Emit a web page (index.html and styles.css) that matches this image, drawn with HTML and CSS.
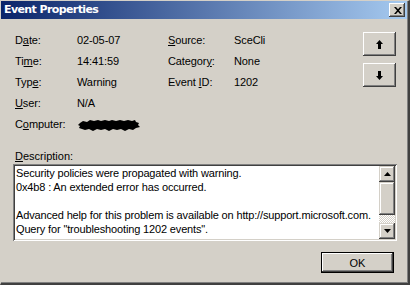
FILE: index.html
```html
<!DOCTYPE html>
<html>
<head>
<meta charset="utf-8">
<link rel="stylesheet" href="styles.css">
</head>
<body>
<div class="window">
  <div class="titlebar">
    <span class="title">Event Properties</span>
    <span class="close">
      <svg width="8" height="7" viewBox="0 0 8 7"><path d="M0 0h2l2 2.3L6 0h2L5 3.5 8 7H6L4 4.7 2 7H0l3-3.5z" fill="#000"/></svg>
    </span>
  </div>
  <div class="content">
    <div class="top">
      <div class="fields">
        <span>D<u>a</u>te:</span><span>02-05-07</span><span><u>S</u>ource:</span><span>SceCli</span>
        <span>Ti<u>m</u>e:</span><span>14:41:59</span><span>Categor<u>y</u>:</span><span>None</span>
        <span>Typ<u>e</u>:</span><span>Warning</span><span>Event <u>I</u>D:</span><span>1202</span>
        <span><u>U</u>ser:</span><span>N/A</span><span></span><span></span>
        <span>C<u>o</u>mputer:</span><span class="blot"><svg width="62" height="11" viewBox="0 0 62 11"><path d="M2 3 L5 1 L9 2 L12 0 L16 1 L20 0 L23 1 L27 0 L31 1 L34 0 L38 1 L42 0 L46 1 L50 0 L54 1 L57 0 L58 2 L61 3 L60 5 L62 7 L58 8 L55 10 L51 9 L47 11 L43 9 L39 10 L35 9 L31 11 L27 9 L23 10 L19 9 L15 11 L11 9 L7 10 L4 9 L1 8 L2 6 L0 5 Z" fill="#000"/></svg></span><span></span><span></span>
      </div>
      <div class="navs">
        <button class="btn nav"><svg width="7" height="9" viewBox="0 0 7 9"><path d="M3.5 0L7 4H5v5H2V4H0z" fill="#000"/></svg></button>
        <button class="btn nav"><svg width="7" height="9" viewBox="0 0 7 9"><path d="M3.5 9L7 5H5V0H2v5H0z" fill="#000"/></svg></button>
      </div>
    </div>
    <div class="desc-label"><u>D</u>escription:</div>
    <div class="textbox">
      <div class="text">
        <div>Security policies were propagated with warning.</div>
        <div>0x4b8 : An extended error has occurred.</div>
        <div>&nbsp;</div>
        <div>Advanced help for this problem is available on http://support.microsoft.com.</div>
        <div>Query for "troubleshooting 1202 events".</div>
      </div>
      <div class="scrollbar">
        <div class="sb-btn"><svg width="7" height="4" viewBox="0 0 7 4"><path d="M3.5 0L7 4H0z" fill="#000"/></svg></div>
        <div class="sb-thumb"></div>
        <div class="sb-track"></div>
        <div class="sb-btn"><svg width="7" height="4" viewBox="0 0 7 4"><path d="M0 0h7L3.5 4z" fill="#000"/></svg></div>
      </div>
    </div>
    <div class="footer">
      <button class="btn ok">OK</button>
    </div>
  </div>
</div>
</body>
</html>
```

FILE: styles.css
```css
* { box-sizing: border-box; }
html, body { margin: 0; padding: 0; }
body {
  width: 410px;
  height: 285px;
  background: #d4d0c8;
  font-family: "Liberation Sans", Arial, sans-serif;
  font-size: 11px;
  color: #000;
  overflow: hidden;
}
u { text-decoration: underline; text-underline-offset: 1px; }
.window {
  width: 410px;
  height: 285px;
  background: #d4d0c8;
  border-top: 1px solid #d4d0c8;
  border-left: 1px solid #d4d0c8;
  border-right: 2px solid #404040;
  border-bottom: 2px solid #404040;
  box-shadow: inset -1px -1px 0 #808080;
  padding: 0 1px 1px 0;
  display: flex;
  flex-direction: column;
}
.titlebar {
  height: 18px;
  flex: none;
  background: linear-gradient(to right, #0a246a, #a6caf0);
  display: flex;
  align-items: flex-start;
  justify-content: space-between;
  padding: 0 2px 0 3px;
}
.title {
  color: #fff;
  font-family: "DejaVu Sans", sans-serif;
  font-weight: bold;
  font-size: 11px;
  line-height: 18px;
  letter-spacing: -0.6px;
}
.close {
  margin-top: 2px;
  width: 16px;
  height: 14px;
  background: #d4d0c8;
  box-shadow: inset -1px -1px 0 #404040, inset 1px 1px 0 #fff, inset -2px -2px 0 #808080;
  display: flex;
  align-items: center;
  justify-content: center;
  padding-left: 1px;
}
.close svg { display: block; }
.content {
  flex: 1;
  padding: 11px 10px 0 12px;
  display: flex;
  flex-direction: column;
}
.top {
  display: grid;
  grid-template-columns: 1fr 33px;
  column-gap: 0;
  margin-right: 1px;
}
.fields {
  display: grid;
  grid-template-columns: 62px 91px 66px 1fr;
  grid-auto-rows: 21px;
  line-height: 21px;
  padding-left: 2px;
  white-space: nowrap;
  letter-spacing: -0.1px;
}
.blot { display: flex; align-items: center; padding-left: 1px; }
.blot svg { display: block; margin-top: 1px; }
.navs {
  display: flex;
  flex-direction: column;
  gap: 7px;
  padding-top: 2px;
}
.btn {
  margin: 0;
  padding: 0;
  border: none;
  background: #d4d0c8;
  font-family: "Liberation Sans", Arial, sans-serif;
  font-size: 11px;
  color: #000;
  box-shadow: inset -1px -1px 0 #404040, inset 1px 1px 0 #fff, inset -2px -2px 0 #808080;
  display: flex;
  align-items: center;
  justify-content: center;
}
.nav { width: 33px; height: 24px; }
.nav svg { display: block; }
.desc-label {
  margin-top: 14px;
  line-height: 14px;
  padding-left: 2px;
}
.textbox {
  margin-top: 1px;
  height: 77px;
  background: #fff;
  box-shadow: inset 1px 1px 0 #808080, inset -1px -1px 0 #fff, inset 2px 2px 0 #404040, inset -2px -2px 0 #d4d0c8;
  padding: 2px;
  display: flex;
}
.text {
  flex: 1;
  padding-left: 1px;
  line-height: 14px;
  white-space: nowrap;
  overflow: hidden;
  letter-spacing: -0.15px;
}
.scrollbar {
  width: 16px;
  display: flex;
  flex-direction: column;
}
.sb-btn, .sb-thumb {
  background: #d4d0c8;
  box-shadow: inset -1px -1px 0 #404040, inset 1px 1px 0 #d4d0c8, inset -2px -2px 0 #808080, inset 2px 2px 0 #fff;
}
.sb-btn {
  height: 16px;
  display: flex;
  align-items: center;
  justify-content: center;
}
.sb-btn svg { display: block; }
.sb-thumb { height: 33px; }
.sb-track {
  flex: 1;
  background-color: #fff;
  background-image: conic-gradient(#d4d0c8 25%, #fff 0 50%, #d4d0c8 0 75%, #fff 0);
  background-size: 2px 2px;
}
.footer {
  display: flex;
  justify-content: flex-end;
  margin-top: 11px;
  padding-right: 3px;
}
.ok {
  width: 73px;
  height: 21px;
  box-shadow: inset 0 0 0 1px #000, inset -2px -2px 0 #404040, inset 2px 2px 0 #fff, inset -3px -3px 0 #808080;
}
```
